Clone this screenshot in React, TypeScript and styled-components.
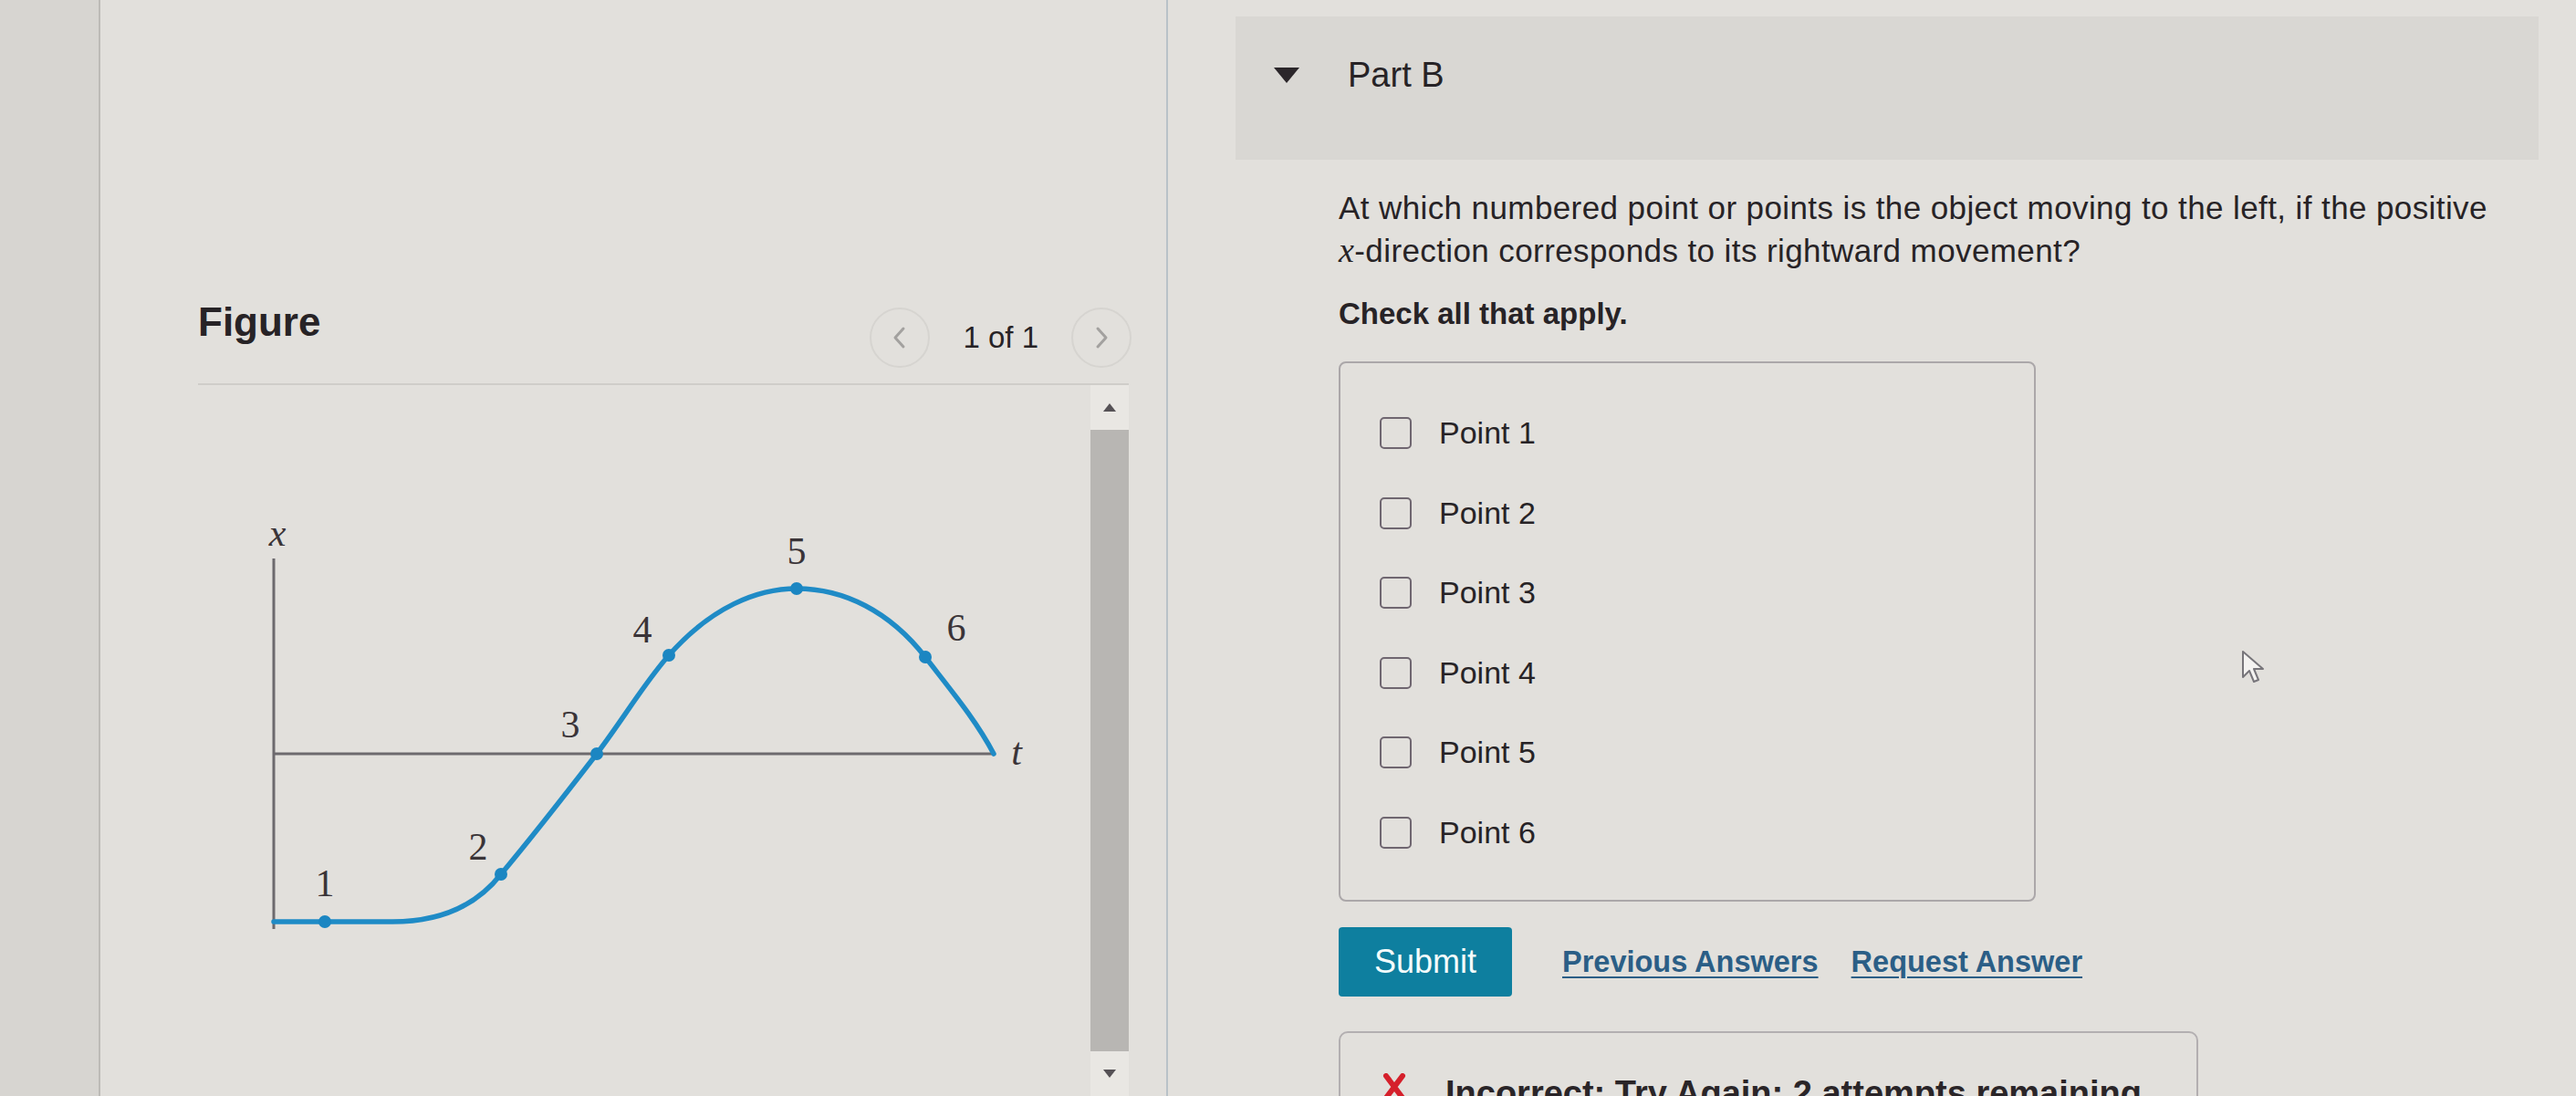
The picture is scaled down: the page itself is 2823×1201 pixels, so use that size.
import styled, { createGlobalStyle } from 'styled-components'

const GlobalStyle = createGlobalStyle`
  html, body {
    margin: 0;
    padding: 0;
    background: #e2e0dc;
    overflow: hidden;
  }
  body {
    font-family: "Liberation Sans", Arial, sans-serif;
    color: #272326;
  }
`

const Page = styled.div`
  display: flex;
  height: 1201px;
  overflow: hidden;
`

const Gutter = styled.div`
  width: 110px;
  flex-shrink: 0;
  box-sizing: border-box;
  background: #d7d5d1;
  border-right: 2px solid #bdbbb7;
`

const FigurePane = styled.div`
  width: 1170px;
  flex-shrink: 0;
  box-sizing: border-box;
  padding: 0 41px 0 107px;
  border-right: 2px solid #b9c2c8;
  display: flex;
  flex-direction: column;
`

const FigureHeader = styled.div`
  margin-top: 300px;
  height: 120px;
  display: flex;
  align-items: center;
  justify-content: space-between;
  border-bottom: 2px solid #cfcdc9;
`

const FigureTitle = styled.h2`
  margin: 0 0 15px;
  font-size: 44px;
  line-height: 50px;
  font-weight: 700;
`

const Pager = styled.div`
  display: flex;
  align-items: center;
  margin: 20px -3px 0 0;
`

const PagerButton = styled.button`
  width: 66px;
  height: 66px;
  padding: 0;
  border: 2px solid #d6d4d0;
  border-radius: 50%;
  background: transparent;
  display: flex;
  align-items: center;
  justify-content: center;
`

const PagerText = styled.span`
  margin: 0 36px;
  font-size: 33px;
`

const FigureBody = styled.div`
  flex: 1;
  display: flex;
  min-height: 0;
`

const Canvas = styled.div`
  flex: 1;
`

const Scrollbar = styled.div`
  width: 42px;
  flex-shrink: 0;
  display: flex;
  flex-direction: column;
  background: #e9e7e3;
`

const ScrollArrow = styled.div`
  height: 50px;
  display: flex;
  align-items: center;
  justify-content: center;
`

const ScrollThumb = styled.div`
  height: 693px;
  background: #b8b6b3;
`

const QuestionPane = styled.div`
  position: relative;
  flex: 1;
  padding: 18px 41px 0 74px;
`

const PartHeader = styled.div`
  height: 157px;
  box-sizing: border-box;
  padding: 41px 0 0 42px;
  background: #d9d7d3;
`

const PartRow = styled.div`
  display: flex;
  align-items: center;
  height: 46px;
`

const PartTitle = styled.span`
  margin-left: 53px;
  font-size: 38px;
  line-height: 46px;
`

const PartBody = styled.div`
  padding-left: 113px;
`

const Prompt = styled.p`
  margin: 29px 0 0;
  max-width: 1300px;
  font-size: 35px;
  line-height: 47px;
  letter-spacing: 0.4px;
`

const NoWrap = styled.span`
  white-space: nowrap;
`

const MathVar = styled.span`
  font-family: "Liberation Serif", "Times New Roman", serif;
  font-style: italic;
  font-size: 38px;
`

const Instruction = styled.p`
  margin: 24px 0 0;
  font-size: 33px;
  line-height: 43px;
  font-weight: 700;
`

const OptionBox = styled.div`
  margin-top: 31px;
  width: 764px;
  height: 592px;
  box-sizing: border-box;
  padding: 33px 0 0 43px;
  border: 2px solid #aba7a9;
  border-radius: 8px;
`

const OptionRow = styled.label`
  display: flex;
  align-items: center;
  height: 87.5px;
  gap: 30px;
`

const CheckBox = styled.span`
  width: 35px;
  height: 35px;
  box-sizing: border-box;
  border: 2.5px solid #6f6670;
  border-radius: 5px;
`

const OptionLabel = styled.span`
  font-size: 34px;
`

const Actions = styled.div`
  margin-top: 28px;
  display: flex;
  align-items: center;
`

const SubmitButton = styled.button`
  width: 190px;
  height: 76px;
  border: none;
  border-radius: 4px;
  background: #0e7f9f;
  color: #f3fbfb;
  font-family: "Liberation Sans", Arial, sans-serif;
  font-size: 36px;
`

const TextLink = styled.a<{ $gap: number }>`
  margin-left: ${(p) => p.$gap}px;
  color: #2b5e86;
  font-size: 32.5px;
  font-weight: 700;
  text-decoration: underline;
  text-decoration-thickness: 2px;
  text-underline-offset: 5px;
`

const Feedback = styled.div`
  margin-top: 38px;
  width: 942px;
  height: 200px;
  box-sizing: border-box;
  padding: 44px 0 0 46px;
  border: 2px solid #b3afb1;
  border-radius: 10px;
  display: flex;
  align-items: flex-start;
  gap: 43px;
`

const FeedbackText = styled.span`
  font-size: 38px;
  line-height: 44px;
  font-weight: 700;
  color: #2a2528;
`

const Cursor = styled.svg`
  position: absolute;
  left: 1175px;
  top: 712px;
`

const points = [
  { n: 1, x: 356, y: 1010, lx: 356, ly: 982 },
  { n: 2, x: 549, y: 958, lx: 524, ly: 942 },
  { n: 3, x: 654, y: 826, lx: 625, ly: 808 },
  { n: 4, x: 733, y: 718, lx: 704, ly: 704 },
  { n: 5, x: 873, y: 645, lx: 873, ly: 618 },
  { n: 6, x: 1014, y: 720, lx: 1048, ly: 702 },
]

const curve =
  'M300 1010 L430 1010 C480 1010 520 995 549 958 C585 915 620 870 654 826 ' +
  'C685 785 705 750 733 718 C780 665 830 645 873 645 C925 645 975 670 1014 720 ' +
  'C1045 760 1070 790 1089 826'

const Graph = () => (
  <svg width="978" height="779" viewBox="217 422 978 779">
    <g stroke="#6d6a6e" strokeWidth="3" fill="none">
      <line x1="300" y1="612" x2="300" y2="1018" />
      <line x1="300" y1="826" x2="1089" y2="826" />
    </g>
    <path d={curve} stroke="#1f8bc6" strokeWidth="5.5" fill="none" strokeLinecap="round" />
    {points.map((p) => (
      <circle key={p.n} cx={p.x} cy={p.y} r="7" fill="#1b86c2" />
    ))}
    <g fontFamily="'Liberation Serif', 'Times New Roman', serif" fontSize="42" fill="#3a3438" textAnchor="middle">
      {points.map((p) => (
        <text key={p.n} x={p.lx} y={p.ly}>
          {p.n}
        </text>
      ))}
      <text x="304" y="598" fontStyle="italic">x</text>
      <text x="1114" y="838" fontStyle="italic">t</text>
    </g>
  </svg>
)

const Chevron = ({ dir }: { dir: 'left' | 'right' }) => (
  <svg width="20" height="30" viewBox="0 0 20 30">
    <polyline
      points={dir === 'left' ? '14,5 5,15 14,25' : '6,5 15,15 6,25'}
      fill="none"
      stroke="#a3a19f"
      strokeWidth="3"
      strokeLinecap="round"
      strokeLinejoin="round"
    />
  </svg>
)

const Triangle = ({ up }: { up: boolean }) => (
  <svg width="14" height="9" viewBox="0 0 14 9">
    <polygon points={up ? '7,0 14,9 0,9' : '0,0 14,0 7,9'} fill="#555155" />
  </svg>
)

const options = ['Point 1', 'Point 2', 'Point 3', 'Point 4', 'Point 5', 'Point 6']

const App = () => {
  return (
    <>
      <GlobalStyle />
      <Page>
        <Gutter />
        <FigurePane>
          <FigureHeader>
            <FigureTitle>Figure</FigureTitle>
            <Pager>
              <PagerButton>
                <Chevron dir="left" />
              </PagerButton>
              <PagerText>1 of 1</PagerText>
              <PagerButton>
                <Chevron dir="right" />
              </PagerButton>
            </Pager>
          </FigureHeader>
          <FigureBody>
            <Canvas>
              <Graph />
            </Canvas>
            <Scrollbar>
              <ScrollArrow>
                <Triangle up />
              </ScrollArrow>
              <ScrollThumb />
              <ScrollArrow>
                <Triangle up={false} />
              </ScrollArrow>
            </Scrollbar>
          </FigureBody>
        </FigurePane>
        <QuestionPane>
          <PartHeader>
            <PartRow>
              <svg width="28" height="17" viewBox="0 0 28 17">
                <polygon points="0,0 28,0 14,17" fill="#2b262a" />
              </svg>
              <PartTitle>Part B</PartTitle>
            </PartRow>
          </PartHeader>
          <PartBody>
            <Prompt>
              At which numbered point or points is the object moving to the left, if the positive{' '}
              <NoWrap>
                <MathVar>x</MathVar>-direction
              </NoWrap>{' '}
              corresponds to its rightward movement?
            </Prompt>
            <Instruction>Check all that apply.</Instruction>
            <OptionBox>
              {options.map((o) => (
                <OptionRow key={o}>
                  <CheckBox />
                  <OptionLabel>{o}</OptionLabel>
                </OptionRow>
              ))}
            </OptionBox>
            <Actions>
              <SubmitButton>Submit</SubmitButton>
              <TextLink $gap={55}>Previous Answers</TextLink>
              <TextLink $gap={36}>Request Answer</TextLink>
            </Actions>
            <Feedback>
              <svg width="26" height="30" viewBox="0 0 26 30">
                <path d="M4 3 L22 27 M22 3 L4 27" stroke="#d5202b" strokeWidth="6" strokeLinecap="round" />
              </svg>
              <FeedbackText>Incorrect; Try Again; 2 attempts remaining</FeedbackText>
            </Feedback>
          </PartBody>
          <Cursor width="32" height="40" viewBox="0 0 32 40">
            <path
              d="M3 2 L3 30 L10 23 L15 35 L20 33 L15 21 L25 21 Z"
              fill="#f4f3f1"
              stroke="#77757a"
              strokeWidth="2"
              strokeLinejoin="round"
            />
          </Cursor>
        </QuestionPane>
      </Page>
    </>
  )
}

export default App
